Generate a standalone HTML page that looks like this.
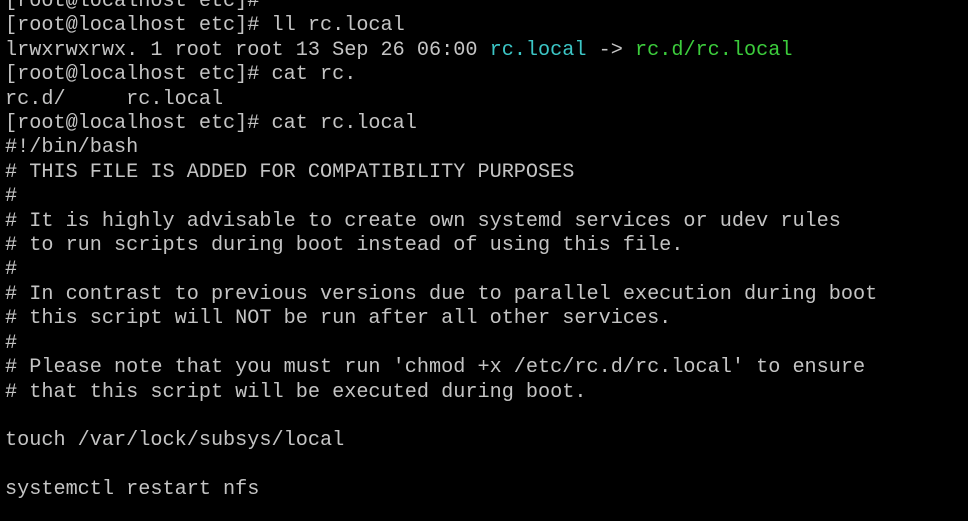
<!DOCTYPE html>
<html><head><style>
html,body{margin:0;padding:0;background:#000;width:968px;height:521px;overflow:hidden}
pre{position:absolute;left:5px;top:-10px;margin:0;font-family:"Liberation Mono",monospace;font-size:20.2px;line-height:24.4px;color:#c4c4c4;white-space:pre}
.c{color:#3cc6c6}.g{color:#3ccc3c}
</style></head><body><pre>[root@localhost etc]#
[root@localhost etc]# ll rc.local
lrwxrwxrwx. 1 root root 13 Sep 26 06:00 <span class="c">rc.local</span> -&gt; <span class="g">rc.d/rc.local</span>
[root@localhost etc]# cat rc.
rc.d/     rc.local
[root@localhost etc]# cat rc.local
#!/bin/bash
# THIS FILE IS ADDED FOR COMPATIBILITY PURPOSES
#
# It is highly advisable to create own systemd services or udev rules
# to run scripts during boot instead of using this file.
#
# In contrast to previous versions due to parallel execution during boot
# this script will NOT be run after all other services.
#
# Please note that you must run 'chmod +x /etc/rc.d/rc.local' to ensure
# that this script will be executed during boot.

touch /var/lock/subsys/local

systemctl restart nfs
</pre></body></html>
